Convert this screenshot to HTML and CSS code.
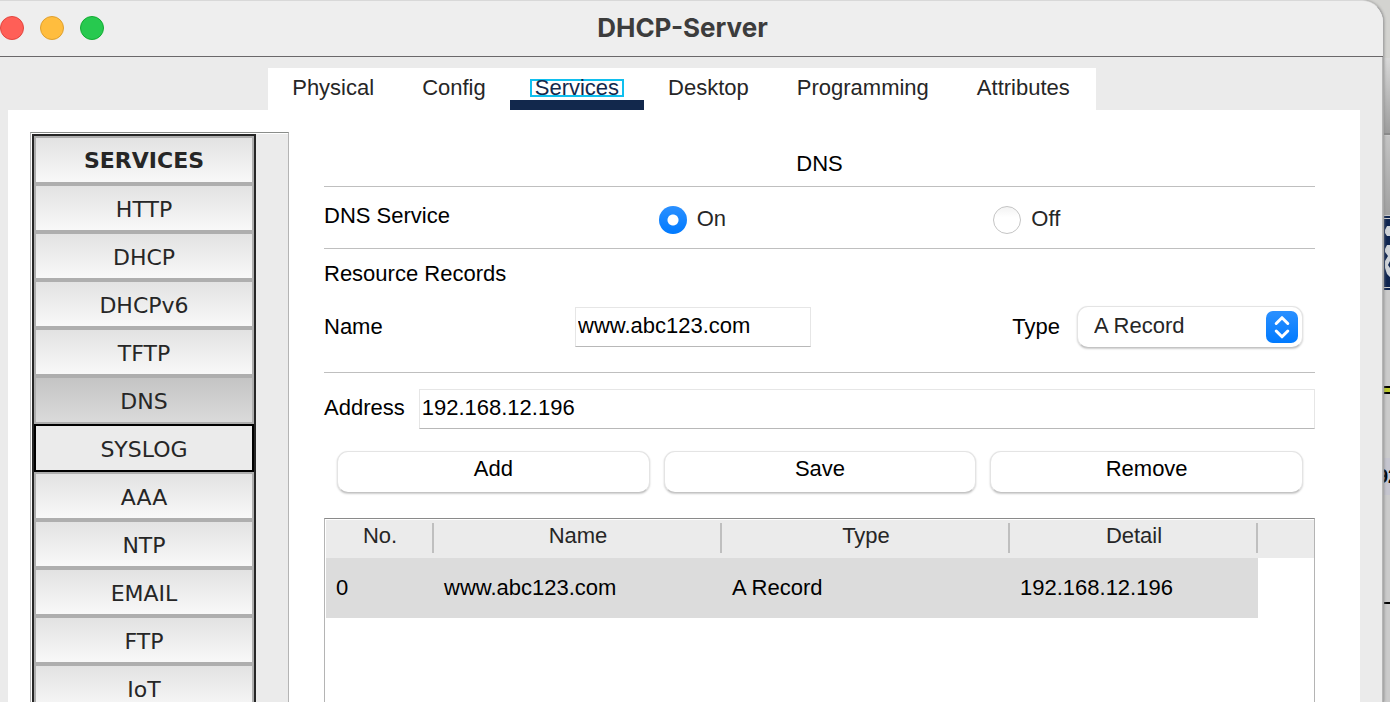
FILE: index.html
```html
<!DOCTYPE html>
<html lang="en">
<head>
<meta charset="utf-8">
<title>DHCP-Server</title>
<link rel="stylesheet" href="styles.css">
</head>
<body>
<svg class="backdrop" width="40" height="702" viewBox="0 0 40 702" aria-hidden="true">
  <defs>
    <linearGradient id="g1" x1="0" y1="0" x2="0" y2="1"><stop offset="0" stop-color="#d8d8d8"/><stop offset="1" stop-color="#9c9c9c"/></linearGradient>
    <linearGradient id="g2" x1="0" y1="0" x2="0" y2="1"><stop offset="0" stop-color="#c4c4c4"/><stop offset="1" stop-color="#a0a0a0"/></linearGradient>
  </defs>
  <rect width="40" height="702" fill="#cbcbcb"/>
  <rect width="40" height="58" fill="#d3d3d0"/>
  <rect y="58" width="40" height="76" fill="url(#g1)"/>
  <rect y="133" width="40" height="2" fill="#8a8a8a"/>
  <rect y="136" width="40" height="79" fill="url(#g2)"/>
  <rect y="216" width="40" height="74" fill="#0f2550"/>
  <rect y="218" width="40" height="1" fill="#d0d0d0"/>
  <rect y="287" width="40" height="1" fill="#d0d0d0"/>
  <path d="M40 226h-3l-2 4v3l2 3h3zM40 245h-3l-2 4v3l3 4-3 5v7l2 6 3 3v-9l-2-3 2-4z" fill="#cfd3d8"/>
  <rect y="386" width="40" height="8" fill="#000"/>
  <rect y="388" width="40" height="4" fill="#bccb2e"/>
  <rect y="458" width="40" height="37" fill="#c5c5cf"/>
  <text class="backdrop-text" x="27" y="483">92</text>
  <rect y="602" width="40" height="2" fill="#000"/>
</svg>
<div class="window">
  <header class="titlebar">
    <div class="lights">
      <button class="light light-close" type="button" aria-label="Close"></button>
      <button class="light light-min" type="button" aria-label="Minimize"></button>
      <button class="light light-zoom" type="button" aria-label="Zoom"></button>
    </div>
    <h1 class="title">DHCP-Server</h1>
  </header>
  <div class="body">
    <nav class="tabs">
      <button class="tab" type="button">Physical</button>
      <button class="tab" type="button">Config</button>
      <button class="tab tab-active" type="button"><span class="tab-focus">Services</span></button>
      <button class="tab" type="button">Desktop</button>
      <button class="tab" type="button">Programming</button>
      <button class="tab" type="button">Attributes</button>
    </nav>
    <main class="panel">
      <aside class="sidebar">
        <div class="services">
          <h2 class="service service-head">SERVICES</h2>
          <button class="service" type="button">HTTP</button>
          <button class="service" type="button">DHCP</button>
          <button class="service" type="button">DHCPv6</button>
          <button class="service" type="button">TFTP</button>
          <button class="service service-current" type="button">DNS</button>
          <button class="service service-focus" type="button">SYSLOG</button>
          <button class="service" type="button">AAA</button>
          <button class="service" type="button">NTP</button>
          <button class="service" type="button">EMAIL</button>
          <button class="service" type="button">FTP</button>
          <button class="service" type="button">IoT</button>
        </div>
      </aside>
      <form class="form">
        <h2 class="heading">DNS</h2>
        <div class="toggle" role="radiogroup" aria-labelledby="svc">
          <span class="toggle-label" id="svc">DNS Service</span>
          <label class="choice"><input class="radio" type="radio" name="dns" checked>On</label>
          <label class="choice"><input class="radio" type="radio" name="dns">Off</label>
        </div>
        <h3 class="subheading">Resource Records</h3>
        <div class="record">
          <label for="name">Name</label>
          <input class="field" id="name" type="text" value="www.abc123.com">
          <label class="type-label" for="type">Type</label>
          <div class="picker">
            <select class="select" id="type"><option>A Record</option></select>
            <svg class="stepper" width="32" height="32" viewBox="0 0 32 32" aria-hidden="true">
              <defs><linearGradient id="blue" x1="0" y1="0" x2="0" y2="1"><stop offset="0" stop-color="#2b90ff"/><stop offset="1" stop-color="#007aff"/></linearGradient></defs>
              <rect width="32" height="32" rx="7" fill="url(#blue)"/>
              <path d="M10.200 12.500L16 6.700l5.800 5.800M10.200 20L16 25.800 21.800 20" fill="none" stroke="#fff" stroke-width="3" stroke-linecap="round" stroke-linejoin="round"/>
            </svg>
          </div>
        </div>
        <div class="address">
          <label class="address-label" for="addr">Address</label>
          <input class="field" id="addr" type="text" value="192.168.12.196">
        </div>
        <div class="actions">
          <button class="action" type="button">Add</button>
          <button class="action" type="button">Save</button>
          <button class="action" type="button">Remove</button>
        </div>
        <div class="grid">
          <table class="records">
            <colgroup><col class="col-no"><col class="col-wide"><col class="col-wide"><col class="col-detail"><col></colgroup>
            <thead><tr><th>No.</th><th>Name</th><th>Type</th><th>Detail</th><td></td></tr></thead>
            <tbody><tr><td>0</td><td>www.abc123.com</td><td>A Record</td><td>192.168.12.196</td></tr></tbody>
          </table>
        </div>
      </form>
    </main>
  </div>
</div>
</body>
</html>
```
FILE: styles.css
```css
* { box-sizing: border-box; }
html, body { height: 100%; }
body {
  margin: 0;
  overflow: hidden;
  position: relative;
  background: #cbcbcb;
  color: #000;
  font: 22px/26px "Liberation Sans", Arial, sans-serif;
}
button, input, select { font: inherit; color: inherit; margin: 0; }
button { padding: 0; border: 0; background: none; }
h1, h2, h3 { margin: 0; font-weight: 400; font-size: 22px; }

.backdrop { position: absolute; top: 0; right: 0; }
.backdrop-text { font: bold 20px "Liberation Sans", Arial, sans-serif; }

.window {
  position: relative;
  display: flex;
  flex-direction: column;
  height: 100%;
  margin-right: 6px;
  overflow: hidden;
  background: #ebebeb;
  border-top: 1px solid #d8d8d8;
  border-right: 1px solid #a8a8a8;
  border-top-right-radius: 22px;
  box-shadow: 0 0 3px #888;
}
.titlebar {
  display: grid;
  grid-template-columns: 104px 1fr 122px;
  align-items: center;
  height: 56px;
  padding-bottom: 2px;
  border-bottom: 1px solid #6a686a;
  background: #eee;
}
.lights { display: flex; gap: 16px; }
.light { width: 24px; height: 24px; border-radius: 50%; border: 1px solid; }
.light-close { background: #ff5f57; border-color: #e2463f; }
.light-min { background: #ffbd3e; border-color: #dfa02f; }
.light-zoom { background: #27c94f; border-color: #12ac32; }
.title {
  color: #3c3c3c;
  font: bold 26px/32px Inter, sans-serif;
  text-align: center;
}

.body {
  display: flex;
  flex: 1;
  flex-direction: column;
  min-height: 0;
  padding: 11px 22px 0 8px;
  border-right: 1px solid #b5b5b5;
}
.tabs {
  display: flex;
  align-self: center;
  margin-right: 4px;
  padding-right: 2px;
  background: #fff;
}
.tab {
  height: 42px;
  padding: 0 24px 2px;
  color: #262626;
}
.tab-active {
  padding: 0 20px;
  border-bottom: 10px solid #12284c;
  color: #12284c;
}
.tab-focus {
  display: block;
  margin-top: 8px;
  padding: 0 3px;
  border: 2px solid #10bfee;
  line-height: 14px;
}

.panel {
  display: flex;
  flex: 1;
  min-height: 0;
  gap: 35px;
  padding: 22px 45px 0 22px;
  background: #fff;
}
.sidebar {
  flex: none;
  width: 259px;
  padding: 1px 0 0 1px;
  overflow: hidden;
  border: 1px solid #b4b4b4;
  border-top-color: #8a8d8a;
  border-bottom: 0;
  background: linear-gradient(#ebebeb, #ebebeb) 2px 1px no-repeat #fff;
}
.services { width: 224px; border: 2px solid #262626; }
.service {
  display: block;
  width: 100%;
  height: 48px;
  padding-top: 3px;
  border: 2px solid #aeaeae;
  background: linear-gradient(#e2e2e2, #f8f8f8);
  color: #262626;
  font: 22px/40px "DejaVu Sans", Verdana, sans-serif;
  text-align: center;
}
.service-head { font-weight: 700; }
.service-current { background: linear-gradient(#c4c4c4, #dadada); }
.service-focus { border-color: #000; background: #ebebeb; }

.form { flex: 1; min-width: 0; display: flex; flex-direction: column; }
.heading {
  padding: 19px 0 9px;
  border-bottom: 1px solid #bfbfbf;
  text-align: center;
}
.toggle {
  display: grid;
  grid-template-columns: repeat(3, 1fr);
  gap: 13px;
  padding: 16px 0 13px;
  border-bottom: 1px solid #bfbfbf;
}
.toggle-label { padding-bottom: 4px; }
.choice { display: flex; gap: 10px; color: #262626; line-height: 32px; }
.radio {
  appearance: none;
  width: 28px;
  height: 28px;
  margin-top: 3px;
  border: 1px solid #c4c4c4;
  border-radius: 50%;
  background: linear-gradient(#f3f3f3, #fff 40%);
}
.radio:checked {
  border: 0;
  background: radial-gradient(circle, #fff 5px, transparent 6px), linear-gradient(#2b90ff, #007aff);
}
.subheading { padding-top: 12px; line-height: 26px; }
.record {
  display: grid;
  grid-template-columns: 251px 236px 1fr 226px;
  align-items: center;
  padding: 19px 12px 24px 0;
  border-bottom: 1px solid #bfbfbf;
}
.type-label { padding-right: 17px; text-align: right; }
.field {
  width: 100%;
  min-width: 0;
  height: 40px;
  padding: 0 2px 3px;
  border: 1px solid #e6e6e6;
  border-bottom-color: #b8b8b8;
  border-radius: 0;
  background: #fff;
}
.picker { position: relative; }
.select {
  display: block;
  appearance: none;
  width: 100%;
  height: 42px;
  padding: 0 40px 3px 16px;
  border: 1px solid #e4e4e4;
  border-bottom-color: #c4c4c4;
  border-radius: 11px;
  background: #fff;
  box-shadow: 0 1px 2px #ccc;
  color: #262626;
}
.stepper { position: absolute; top: 5px; right: 5px; pointer-events: none; }
.address {
  display: grid;
  grid-template-columns: auto 1fr;
  align-items: center;
  gap: 14px;
  padding: 16px 0 22px;
}
.address-label { padding-bottom: 3px; }
.actions {
  display: grid;
  grid-template-columns: repeat(3, 1fr);
  gap: 14px;
  padding: 0 12px 25px 13px;
}
.action {
  height: 42px;
  padding-bottom: 6px;
  border: 1px solid #e4e4e4;
  border-bottom-color: #c4c4c4;
  border-radius: 11px;
  background: #fff;
  box-shadow: 0 1px 2px #ccc;
}
.grid {
  flex: 1;
  padding: 1px 0 0 1px;
  border: 1px solid #b4b4b4;
  border-top-color: #8a8a8a;
  border-bottom: 0;
}
.records { width: 100%; table-layout: fixed; border-collapse: collapse; }
.col-no { width: 108px; }
.col-wide { width: 288px; }
.col-detail { width: 248px; }
.records thead { background: #ebebeb; }
.records th {
  height: 38px;
  padding: 0 0 6px;
  background: linear-gradient(#bfbfbf, #bfbfbf) right 3px / 2px 30px no-repeat;
  color: #262626;
  font-weight: 400;
}
.records tbody td { height: 60px; padding: 0 10px; background: #dcdcdc; }
```
